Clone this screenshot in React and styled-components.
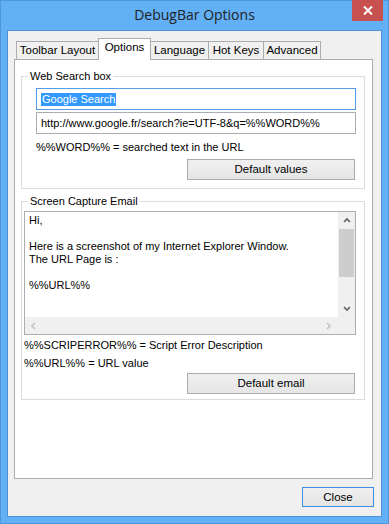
import React from 'react';
import styled, { createGlobalStyle } from 'styled-components';

const Global = createGlobalStyle`
  html, body { margin: 0; padding: 0; background: #62b0f6; }
  body {
    font-family: "Liberation Sans", Arial, sans-serif;
    font-size: 11px;
    color: #000;
  }
  * { box-sizing: border-box; }
`;

const Window = styled.div`
  width: 389px;
  height: 524px;
  background: #62b0f6;
  border: 1px solid #4f97dc;
  display: flex;
  flex-direction: column;
`;

const TitleBar = styled.div`
  height: 29px;
  display: grid;
  grid-template-columns: 1fr auto 1fr;
  align-items: start;
`;

const Title = styled.div`
  grid-column: 2;
  font-family: "Open Sans", "Liberation Sans", sans-serif;
  font-size: 14px;
  line-height: 28px;
  color: #222;
`;

const CloseX = styled.div`
  grid-column: 3;
  justify-self: end;
  width: 31px;
  height: 21px;
  margin: -1px 5px 0 0;
  background: #c75050;
  display: flex;
  align-items: center;
  justify-content: center;
`;

const Client = styled.div`
  flex: 1;
  margin: 0 6px 6px 6px;
  background: #f0f0f0;
  border: 1px solid #4d91d6;
  display: flex;
  flex-direction: column;
  padding: 7px 8px 0 6px;
`;

const TabStrip = styled.div`
  display: flex;
  align-items: flex-end;
  padding-left: 2px;
  height: 21px;
  position: relative;
  z-index: 1;
`;

const Tab = styled.div`
  width: ${p => p.$w}px;
  height: ${p => (p.$active ? 22 : 18)}px;
  margin-bottom: ${p => (p.$active ? -1 : 0)}px;
  margin-left: ${p => (p.$first ? 0 : -1)}px;
  background: ${p => (p.$active ? '#fff' : '#f0f0f0')};
  border: 1px solid #acacac;
  border-bottom: none;
  display: flex;
  justify-content: center;
  padding-top: 2px;
  line-height: 13px;
  font-size: 11.5px;
  position: relative;
  z-index: ${p => (p.$active ? 2 : 1)};
`;

const Panel = styled.div`
  height: 420px;
  background: #fff;
  border: 1px solid #acacac;
  padding: 16px 7px 0 6px;
  display: flex;
  flex-direction: column;
  gap: 12px;
`;

const Group = styled.div`
  border: 1px solid #dcdcdc;
  display: flex;
  flex-direction: column;
  padding: 0 8px ${p => p.$pb}px ${p => p.$pl}px;
`;

const Legend = styled.div`
  width: fit-content;
  margin: -7px 0 ${p => p.$mb}px ${p => 6 - p.$pl}px;
  padding: 0 2px;
  background: #fff;
  line-height: 13px;
`;

const Input = styled.div`
  height: 22px;
  border: 1px solid ${p => (p.$focus ? '#569de5' : '#abadb3')};
  background: #fff;
  display: flex;
  align-items: center;
  padding-left: 4px;
  white-space: nowrap;
  overflow: hidden;
  margin-bottom: ${p => p.$mb || 0}px;
`;

const Selected = styled.span`
  background: #3399ff;
  color: #fff;
  line-height: 13px;
  padding: 0 1px;
`;

const Note = styled.div`
  line-height: 13px;
  margin-top: ${p => p.$mt}px;
  white-space: nowrap;
`;

const Button = styled.div`
  width: ${p => p.$w}px;
  height: ${p => p.$h}px;
  align-self: flex-end;
  margin-top: ${p => p.$mt || 0}px;
  margin-right: ${p => p.$mr || 0}px;
  border: 1px solid ${p => (p.$default ? '#3c8fe3' : '#acacac')};
  background: linear-gradient(#f0f0f0, #e5e5e5);
  display: flex;
  align-items: center;
  justify-content: center;
  line-height: 13px;
  font-size: 11.5px;
`;

const ScrollBox = styled.div`
  height: 124px;
  border: 1px solid #abadb3;
  display: grid;
  grid-template-columns: 1fr 17px;
  grid-template-rows: 1fr 17px;
  background: #fff;
`;

const EmailText = styled.div`
  padding: 2px 0 0 4px;
  line-height: 13px;
  white-space: pre;
  overflow: hidden;
`;

const VBar = styled.div`
  background: #f0f0f0;
  display: flex;
  flex-direction: column;
  align-items: center;
`;

const HBar = styled.div`
  background: #f0f0f0;
  display: flex;
  align-items: center;
  justify-content: space-between;
  padding: 0 5px;
`;

const Corner = styled.div`
  background: #f0f0f0;
`;

const ArrowCell = styled.div`
  height: 17px;
  width: 17px;
  display: flex;
  align-items: center;
  justify-content: center;
`;

const Thumb = styled.div`
  width: 15px;
  height: 48px;
  background: #cdcdcd;
`;

const Spacer = styled.div`
  flex: 1;
`;

const Footer = styled.div`
  display: flex;
  justify-content: flex-end;
  margin: 8px -1px 0 0;
`;

const Chevron = ({ dir, color }) => {
  const paths = {
    up: 'M1 5 L4 2 L7 5',
    down: 'M1 2 L4 5 L7 2',
    left: 'M5 1 L2 4 L5 7',
    right: 'M2 1 L5 4 L2 7',
  };
  return (
    <svg width="8" height="8" viewBox="0 0 8 8">
      <path d={paths[dir]} fill="none" stroke={color} strokeWidth="1.6" />
    </svg>
  );
};

const tabs = [
  { label: 'Toolbar Layout', w: 83 },
  { label: 'Options', w: 53, active: true },
  { label: 'Language', w: 59 },
  { label: 'Hot Keys', w: 56 },
  { label: 'Advanced', w: 58 },
];

const emailBody = `Hi,

Here is a screenshot of my Internet Explorer Window.
The URL Page is :

%%URL%%`;

export default function App() {
  return (
    <>
      <Global />
      <Window>
        <TitleBar>
          <Title>DebugBar Options</Title>
          <CloseX>
            <svg width="10" height="9" viewBox="0 0 10 9">
              <path d="M1 0.5 L9 8.5 M9 0.5 L1 8.5" stroke="#fff" strokeWidth="2" />
            </svg>
          </CloseX>
        </TitleBar>
        <Client>
          <TabStrip>
            {tabs.map((t, i) => (
              <Tab key={t.label} $w={t.w} $active={t.active} $first={i === 0}>
                {t.label}
              </Tab>
            ))}
          </TabStrip>
          <Panel>
            <Group $pl={14} $pb={8}>
              <Legend $pl={14} $mb={5}>Web Search box</Legend>
              <Input $focus $mb={2}>
                <Selected>Google Search</Selected>
              </Input>
              <Input>http://www.google.fr/search?ie=UTF-8&amp;q=%%WORD%%</Input>
              <Note $mt={7}>%%WORD%% = searched text in the URL</Note>
              <Button $w={168} $h={21} $mt={5} $mr={1}>Default values</Button>
            </Group>
            <Group $pl={2} $pb={5}>
              <Legend $pl={2} $mb={3}>Screen Capture Email</Legend>
              <ScrollBox>
                <EmailText>{emailBody}</EmailText>
                <VBar>
                  <ArrowCell><Chevron dir="up" color="#606060" /></ArrowCell>
                  <Thumb />
                  <Spacer />
                  <ArrowCell><Chevron dir="down" color="#606060" /></ArrowCell>
                </VBar>
                <HBar>
                  <Chevron dir="left" color="#c2c2c2" />
                  <Chevron dir="right" color="#c2c2c2" />
                </HBar>
                <Corner />
              </ScrollBox>
              <Note $mt={4}>%%SCRIPERROR%% = Script Error Description</Note>
              <Note $mt={5}>%%URL%% = URL value</Note>
              <Button $w={168} $h={21} $mt={3} $mr={1}>Default email</Button>
            </Group>
          </Panel>
          <Footer>
            <Button $w={72} $h={20} $default>Close</Button>
          </Footer>
        </Client>
      </Window>
    </>
  );
}
